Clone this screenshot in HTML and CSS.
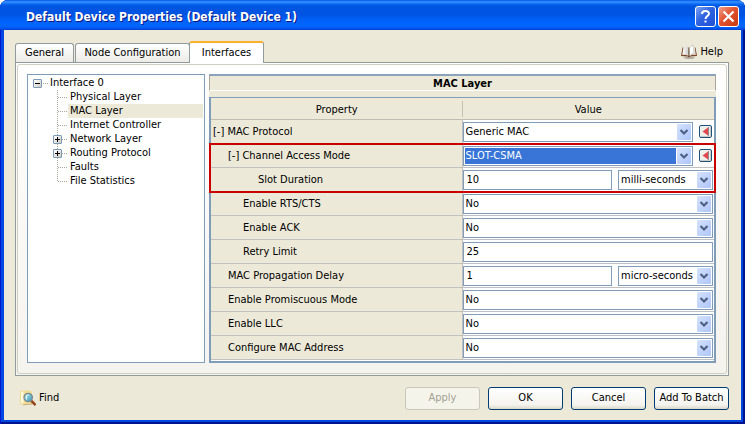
FILE: index.html
```
<!DOCTYPE html>
<html lang="en">
<head>
<meta charset="utf-8">
<title>Default Device Properties (Default Device 1)</title>
<link rel="stylesheet" href="styles.css">
</head>
<body>
<svg class="defs" aria-hidden="true">
  <defs>
    <linearGradient id="dropFill" x1="0" y1="0" x2="1" y2="1"><stop offset="0" stop-color="#d6e2fd"/><stop offset="1" stop-color="#aec6fa"/></linearGradient>
    <linearGradient id="lens" x1="0" y1="0" x2="1" y2="1"><stop offset="0" stop-color="#c4eef2"/><stop offset="1" stop-color="#2f93b4"/></linearGradient>
    <linearGradient id="leaf" x1="0" y1="0" x2="1" y2="0"><stop offset="0" stop-color="#fff"/><stop offset="1" stop-color="#cfcdc8"/></linearGradient>
  </defs>
  <symbol id="drop" viewBox="0 0 14 16">
    <rect width="14" height="16" rx="1" fill="url(#dropFill)"/>
    <path d="M3.5 6 L7 9.5 L10.500 6" fill="none" stroke="#4d6185" stroke-width="2.200"/>
  </symbol>
  <symbol id="back" viewBox="0 0 13 13">
    <rect x=".5" y=".5" width="12" height="12" rx="1.500" fill="#f1efe9" stroke="#1c5180"/>
    <path d="M2 11.500 H11.500 V2" fill="none" stroke="#cfcbc0"/>
    <path d="M9 2.500 V10.500 L3.500 6.500 Z" fill="#e2484e"/>
    <path d="M9.500 2 V11" stroke="#8c8c8c"/>
  </symbol>
</svg>
<div class="window">
  <header class="titlebar">
    <h1>Default Device Properties (Default Device 1)</h1>
    <button class="caption help" aria-label="Help"><svg viewBox="0 0 19 19"><path d="M6 7 C6 3 13 3 13 6.500 C13 9 9.500 9 9.500 12" fill="none" stroke="#fff" stroke-width="2"/><rect x="8.500" y="13.500" width="2" height="2" fill="#fff"/></svg></button>
    <button class="caption close" aria-label="Close"><svg viewBox="0 0 19 19"><path d="M4.500 4.500 L14.500 14.500 M14.500 4.500 L4.500 14.500" stroke="#fff" stroke-width="2.200"/></svg></button>
  </header>
  <main class="content">
    <div class="tabrow">
      <div class="tabs" role="tablist">
        <button class="tab general" role="tab">General</button>
        <button class="tab node" role="tab">Node Configuration</button>
        <button class="tab active" role="tab" aria-selected="true">Interfaces</button>
      </div>
      <a class="iconlink" href="#help">
        <svg width="16" height="16" viewBox="0 0 16 16"><path d="M2 13 H14 L12 15 H5Z" fill="#b5b0a5"/><path d="M1.500 3.500 L0 12 L6.500 12.500 L8 13.500 L9.500 12.500 L16 12 L14.500 3.500Z" fill="#7a4528"/><path d="M2.500 3 Q5.500 1.500 7.500 3.500 L7.500 12 Q4.500 10.300 1.200 11 Z" fill="url(#leaf)"/><path d="M8.500 3.500 Q11 2.500 13.800 3 L14.800 11 Q11.500 10.300 8.500 12Z" fill="#e4e2dc"/><path d="M8 4 L12 .8 L13 8.500 L8.500 12Z" fill="#fff" stroke="#aaa59b" stroke-width=".5"/><path d="M8 4 V12.500" stroke="#6d5a4d" stroke-width=".8"/></svg>
        Help</a>
    </div>
    <section class="pane">
      <div class="inner">
        <nav class="tree" aria-label="Interfaces">
          <div class="root"><span class="expander"></span><a href="#if0">Interface 0</a></div>
          <ul>
            <li><a href="#phy">Physical Layer</a></li>
            <li><a class="selected" href="#mac">MAC Layer</a></li>
            <li><a href="#ic">Internet Controller</a></li>
            <li><span class="expander plus"></span><a href="#net">Network Layer</a></li>
            <li><span class="expander plus"></span><a href="#rt">Routing Protocol</a></li>
            <li><a href="#faults">Faults</a></li>
            <li><a href="#stats">File Statistics</a></li>
          </ul>
        </nav>
        <div class="props">
          <h2>MAC Layer</h2>
          <div class="grid">
          <table>
            <thead><tr><th>Property</th><th>Value</th></tr></thead>
            <tbody>
              <tr><td><label for="f1">[-] MAC Protocol</label></td><td><div class="cell"><span class="combo"><select id="f1"><option>Generic MAC</option></select><svg><use href="#drop"/></svg></span><button class="reset" aria-label="Reset MAC Protocol"><svg><use href="#back"/></svg></button></div></td></tr>
            </tbody>
            <tbody class="marked">
              <tr><td class="i1"><label for="f2">[-] Channel Access Mode</label></td><td><div class="cell"><span class="combo"><select id="f2" class="current"><option>SLOT-CSMA</option></select><svg><use href="#drop"/></svg></span><button class="reset" aria-label="Reset Channel Access Mode"><svg><use href="#back"/></svg></button></div></td></tr>
              <tr><td class="i3"><label for="f3">Slot Duration</label></td><td><div class="cell"><input id="f3" type="text" value="10"><span class="combo unit"><select aria-label="Slot Duration unit"><option>milli-seconds</option></select><svg><use href="#drop"/></svg></span></div></td></tr>
            </tbody>
            <tbody>
              <tr><td class="i2"><label for="f4">Enable RTS/CTS</label></td><td><div class="cell"><span class="combo"><select id="f4"><option>No</option></select><svg><use href="#drop"/></svg></span></div></td></tr>
              <tr><td class="i2"><label for="f5">Enable ACK</label></td><td><div class="cell"><span class="combo"><select id="f5"><option>No</option></select><svg><use href="#drop"/></svg></span></div></td></tr>
              <tr><td class="i2"><label for="f6">Retry Limit</label></td><td><div class="cell"><input id="f6" type="text" value="25"></div></td></tr>
              <tr><td class="i1"><label for="f7">MAC Propagation Delay</label></td><td><div class="cell"><input id="f7" type="text" value="1"><span class="combo unit"><select aria-label="MAC Propagation Delay unit"><option>micro-seconds</option></select><svg><use href="#drop"/></svg></span></div></td></tr>
              <tr><td class="i1"><label for="f8">Enable Promiscuous Mode</label></td><td><div class="cell"><span class="combo"><select id="f8"><option>No</option></select><svg><use href="#drop"/></svg></span></div></td></tr>
              <tr><td class="i1"><label for="f9">Enable LLC</label></td><td><div class="cell"><span class="combo"><select id="f9"><option>No</option></select><svg><use href="#drop"/></svg></span></div></td></tr>
              <tr><td class="i1"><label for="f10">Configure MAC Address</label></td><td><div class="cell"><span class="combo"><select id="f10"><option>No</option></select><svg><use href="#drop"/></svg></span></div></td></tr>
            </tbody>
          </table>
          </div>
        </div>
      </div>
    </section>
    <footer class="actions">
      <a class="iconlink find" href="#find">
        <svg width="16" height="16" viewBox="0 0 16 16"><path d="M0 .8 L8 .3 L12 1.500 V14 L3 14.800 L0 13.500Z" fill="#f3dc96"/><path d="M1 1.800 L3.500 1.500 L3.500 13.500 L1 12.800Z" fill="#fff9dc"/><path d="M3 14.800 L12 14" stroke="#b39a5b" stroke-width=".7"/><circle cx="8.200" cy="7.500" r="4.200" fill="url(#lens)" stroke="#7b8790" stroke-width="1.300"/><path d="M6.500 9.500 V6 Q7.500 4.500 8.500 5" fill="none" stroke="#e6fbfd"/><path d="M11.500 11 L15.500 15" stroke="#96431a" stroke-width="2.500"/></svg>
        Find</a>
      <button class="push" disabled>Apply</button>
      <button class="push">OK</button>
      <button class="push">Cancel</button>
      <button class="push">Add To Batch</button>
    </footer>
  </main>
</div>
</body>
</html>
```
FILE: styles.css
```
* { box-sizing: border-box; }
body {
  margin: 0;
  background: #fff;
  color: #000;
  font: 11px/14px "DejaVu Sans Condensed", Tahoma, "DejaVu Sans", sans-serif;
}
button, input, select { font: inherit; color: inherit; margin: 0; }
a { color: inherit; text-decoration: none; }
.defs { position: absolute; width: 0; height: 0; }

.window {
  min-height: 100vh;
  display: flex;
  flex-direction: column;
  padding: 0 4px 4px;
  border-radius: 8px 8px 0 0;
  overflow: hidden;
  background: #0046e0;
  box-shadow: inset 1px 0 #0019cf, inset -2px -2px #00138c;
}
.titlebar {
  display: flex;
  align-items: center;
  gap: 2px;
  height: 30px;
  margin: 0 -4px;
  padding: 3px 6px 0 26px;
  background: linear-gradient(#0058e6 0, #3a93ff 2px, #0a6af5 4px, #0055e0 6px, #0054e3 15px, #0062fa 21px, #0066ff 26px, #005bf0 28px, #003dd0 30px);
}
h1 {
  flex: 1;
  margin: 0;
  color: #fff;
  font: bold 12px/16px "DejaVu Sans Condensed", "Trebuchet MS", sans-serif;
  text-shadow: 1px 1px #0a1883;
  white-space: nowrap;
}
.caption {
  width: 21px;
  height: 21px;
  padding: 0;
  border: 1px solid #fff;
  border-radius: 3px;
}
.caption svg { display: block; width: 19px; height: 19px; }
.help { background: linear-gradient(135deg, #7da2f5, #2f63e0 45%, #1e50d5); }
.close { background: linear-gradient(135deg, #f0a08a, #e2532e 45%, #c63a12); }

.content {
  flex: 1;
  display: flex;
  flex-direction: column;
  padding: 11px 12px 0 11px;
  background: #ece9d8;
}
.tabrow { display: flex; justify-content: space-between; height: 21px; }
.tabs { display: flex; align-items: flex-end; }
.tab {
  height: 19px;
  padding: 0;
  border: 1px solid #919b9c;
  border-bottom: 0;
  border-radius: 3px 3px 0 0;
  background: linear-gradient(#fff, #ecebe6);
}
.general { width: 59px; margin-right: 1px; }
.node { width: 115px; }
.active {
  position: relative;
  width: 75px;
  height: 22px;
  margin-bottom: -1px;
  margin-left: -1px;
  border-top: 2px solid #fdb02c;
  background: #fff;
}
.iconlink { display: flex; align-items: center; gap: 3px; }
.tabrow .iconlink { padding-right: 6px; }

.pane {
  flex: 1;
  display: flex;
  padding: 1px;
  border: 1px solid #919b9c;
  background: linear-gradient(#fff, #f4f3ee);
}
.inner {
  flex: 1;
  display: flex;
  gap: 4px;
  padding: 9px 10px 10px 9px;
  border: 1px solid #d0cec0;
  border-radius: 3px;
}
.tree {
  width: 178px;
  flex: none;
  padding: 1px 1px 0 5px;
  border: 1px solid #7f9db9;
  background: #fff;
}
.root { position: relative; padding-left: 15px; }
.root::before {
  content: "";
  position: absolute;
  left: 10px;
  top: 7px;
  width: 5px;
  border-top: 1px dotted #aca899;
}
.root a, .tree li a { padding-left: 2px; }
.tree ul {
  position: relative;
  margin: 0 0 0 20px;
  padding: 0;
  list-style: none;
}
.tree ul::before {
  content: "";
  position: absolute;
  left: 4px;
  top: 0;
  bottom: 7px;
  border-left: 1px dotted #aca899;
}
.tree li { position: relative; padding-left: 15px; }
.tree li::before {
  content: "";
  position: absolute;
  left: 5px;
  top: 7px;
  width: 9px;
  border-top: 1px dotted #aca899;
}
.tree li a { display: block; }
.tree .selected { background: #ece9d8; }
.expander {
  position: absolute;
  z-index: 1;
  left: 0;
  top: 3px;
  width: 9px;
  height: 9px;
  border: 1px solid #7b9ab8;
  border-radius: 1px;
  background: linear-gradient(#000, #000) center / 5px 1px no-repeat, linear-gradient(135deg, #fff, #d2cdbf);
}
.plus { background: linear-gradient(#000, #000) center / 5px 1px no-repeat, linear-gradient(#000, #000) center / 1px 5px no-repeat, linear-gradient(135deg, #fff, #d2cdbf); }

.props { flex: 1; display: flex; flex-direction: column; background: #ece9d8; }
h2 {
  height: 17px;
  margin: 0 0 6px;
  border: 1px solid #aca899;
  border-top: 2px solid #8ba3ba;
  border-bottom: 1px solid #fff;
  font: bold 11px/15px "DejaVu Sans Condensed", sans-serif;
  text-align: center;
}
.grid { flex: 1; border: solid #7f9db9; border-width: 1px 2px 2px; background: #fff; }
table { width: 100%; table-layout: fixed; border-collapse: separate; border-spacing: 0; background: #ece9d8; }
th {
  height: 22px;
  padding: 2px 0 0;
  border-bottom: 1px solid #c0bcb0;
  font-weight: normal;
}
th:first-child { background: linear-gradient(#c5c2b3, #c5c2b3) right center / 1px 16px no-repeat; }
td {
  height: 24px;
  padding: 0 0 0 2px;
  border-bottom: 1px solid #c0c0c0;
  white-space: nowrap;
}
td:first-child { border-right: 1px solid #c0c0c0; }
td:last-child { padding: 0 1px 0 0; background: #fff; }
td.i1 { padding-left: 17px; }
td.i2 { padding-left: 32px; }
td.i3 { padding-left: 47px; }
.marked { position: relative; }
.marked::after {
  content: "";
  position: absolute;
  inset: -1px -2px;
  border: 2px solid #c80000;
  pointer-events: none;
}
.cell { display: flex; align-items: center; gap: 6px; }
.combo {
  position: relative;
  flex: 1;
  height: 20px;
  padding: 1px;
  border: 1px solid #7f9db9;
  background: #fff;
}
.combo select {
  display: block;
  width: 100%;
  height: 16px;
  padding: 0 0 0 1px;
  border: 0;
  border-radius: 0;
  appearance: none;
  background: #fff;
}
.combo select.current {
  background: linear-gradient(#3875d7, #3875d7) left / calc(100% - 15px) 100% no-repeat;
  color: #fff;
}
.combo svg { position: absolute; right: 1px; top: 1px; width: 14px; height: 16px; pointer-events: none; }
.combo.unit { flex: none; width: 95px; }
input {
  flex: 1;
  min-width: 0;
  height: 20px;
  padding: 0 3px;
  border: 1px solid #7f9db9;
  background: #fff;
}
.reset { width: 14px; height: 13px; padding: 0; border: 0; background: none; }
.reset svg { display: block; width: 13px; height: 13px; }

.actions { display: flex; align-items: center; gap: 8px; height: 44px; }
.find { margin-right: auto; padding-left: 5px; }
.push {
  width: 75px;
  height: 23px;
  padding: 0;
  border: 1px solid #003c74;
  border-radius: 3px;
  background: linear-gradient(#fff, #f4f3ee 80%, #dcd8cb);
}
.push:disabled { border-color: #c9c7ba; background: #f5f4ea; color: #a1a192; }
```
